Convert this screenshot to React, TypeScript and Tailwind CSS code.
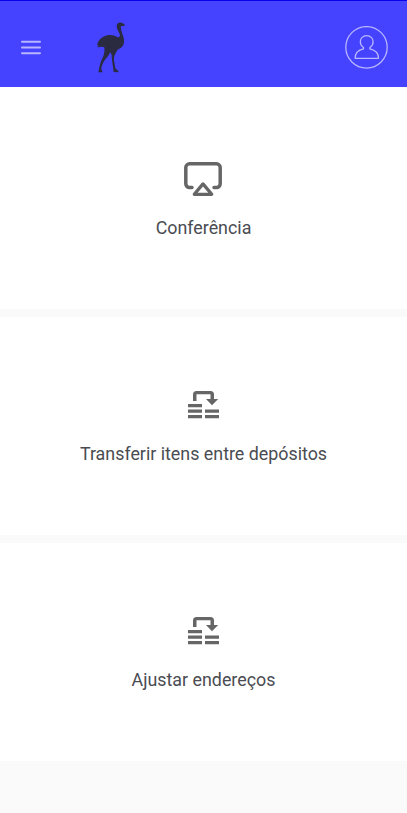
import React from 'react';

const MenuIcon = () => (
  <svg width="20" height="15" viewBox="0 0 20 15" fill="none" stroke="#b7b6ff" strokeWidth="2" strokeLinecap="round">
    <path d="M1 1.7h18M1 7.500h18M1 13.200h18" />
  </svg>
);

const OstrichLogo = () => (
  <svg width="28" height="51" viewBox="37 35 84 153" fill="#2a2b41">
    <path d="M96 46 C97 38 104 35 110 37 C114 38 117 40 121 44 C120 47 116 47 111 47 C108 48 108 51 109 55 C110 65 115 73 117 83 C120 96 117 107 109 112 C104 115 99 117 97 121 L90 135 C88 140 88 144 88 149 L92 174 L101 182 L101 186 L87 185 L82 149 C81 142 82 136 80 131 L77 126 C72 137 64 144 59 151 C53 160 50 169 50 177 L54 186 L41 186 L43 177 C45 165 49 151 55 140 C59 132 60 122 59 111 C55 110 51 108 47 110 L38 111 L42 104 L37 105 C39 93 46 84 56 79 C69 72 86 72 99 81 C106 80 107 76 105 71 C102 62 95 55 96 46 Z" />
  </svg>
);

const UserIcon = () => (
  <svg width="43" height="43" viewBox="0 0 43 43" fill="none" stroke="#b9b8ff" strokeWidth="1.25" strokeLinejoin="round">
    <circle cx="21.500" cy="21.300" r="20.700" />
    <path d="M18.500 21.500C16.500 20.200 15.300 18.200 15.300 15.700C15.300 12.200 18 9.600 21.700 9.600S28.100 12.200 28.100 15.700C28.100 18.200 26.900 20.200 24.900 21.500V22.900C29.800 24 33.500 26.800 33.500 32.300H10.100C10.100 26.800 13.600 24 18.500 22.900Z" />
  </svg>
);

const AirplayIcon = () => (
  <svg width="38" height="34" viewBox="0 0 38 34" fill="none" stroke="#666" strokeWidth="3.500" strokeLinejoin="round">
    <path d="M8 25.500H5.500a3.700 3.700 0 0 1-3.700-3.700V5.500a3.700 3.700 0 0 1 3.700-3.700h27a3.700 3.700 0 0 1 3.700 3.700v16.300a3.700 3.700 0 0 1-3.700 3.700H30" strokeLinecap="round" />
    <path d="M19 21.900 27.700 32.300H10.300z" strokeWidth="3.300" />
  </svg>
);

const TransferIcon = () => (
  <svg width="31" height="28" viewBox="0 0 31 28" fill="#666">
    <path d="M5 10V3.500A3.500 3.500 0 0 1 8.500 0h14A3.500 3.500 0 0 1 26 3.500V8h4.200L24 14.200 18 8h4.500V3.300h-14V10z" />
    <path d="M0 13h14v3.200H0zM0 18.500h14v3.200H0zM0 24h14v3.200H0zM17 18.500h14v3.200H17zM17 24h14v3.200H17z" />
  </svg>
);

interface MenuCardProps {
  icon: React.ReactNode;
  label: string;
}

const MenuCard = ({ icon, label }: MenuCardProps) => (
  <button className="w-full h-[218px] pt-0.5 bg-white flex flex-col items-center justify-center">
    <span className="h-[38px] flex items-center justify-center">{icon}</span>
    <span className="mt-4 text-[17.85px] leading-7 text-[#4a4c52]">{label}</span>
  </button>
);

export default function App() {
  return (
    <div className="min-h-screen bg-[#fafafa] font-['Roboto',sans-serif]">
      <header className="h-[87px] bg-[#4543ff] border-t border-[#0700e8] pl-[21px] pr-[19px] pt-[7px] flex items-center">
        <button aria-label="Menu"><MenuIcon /></button>
        <div className="ml-14"><OstrichLogo /></div>
        <button aria-label="Perfil" className="ml-auto"><UserIcon /></button>
      </header>

      <main className="flex flex-col gap-2">
        <div className="bg-white pt-1">
          <MenuCard icon={<span className="mr-px"><AirplayIcon /></span>} label="Conferência" />
        </div>
        <MenuCard icon={<TransferIcon />} label="Transferir itens entre depósitos" />
        <MenuCard icon={<TransferIcon />} label="Ajustar endereços" />
      </main>
    </div>
  );
}
